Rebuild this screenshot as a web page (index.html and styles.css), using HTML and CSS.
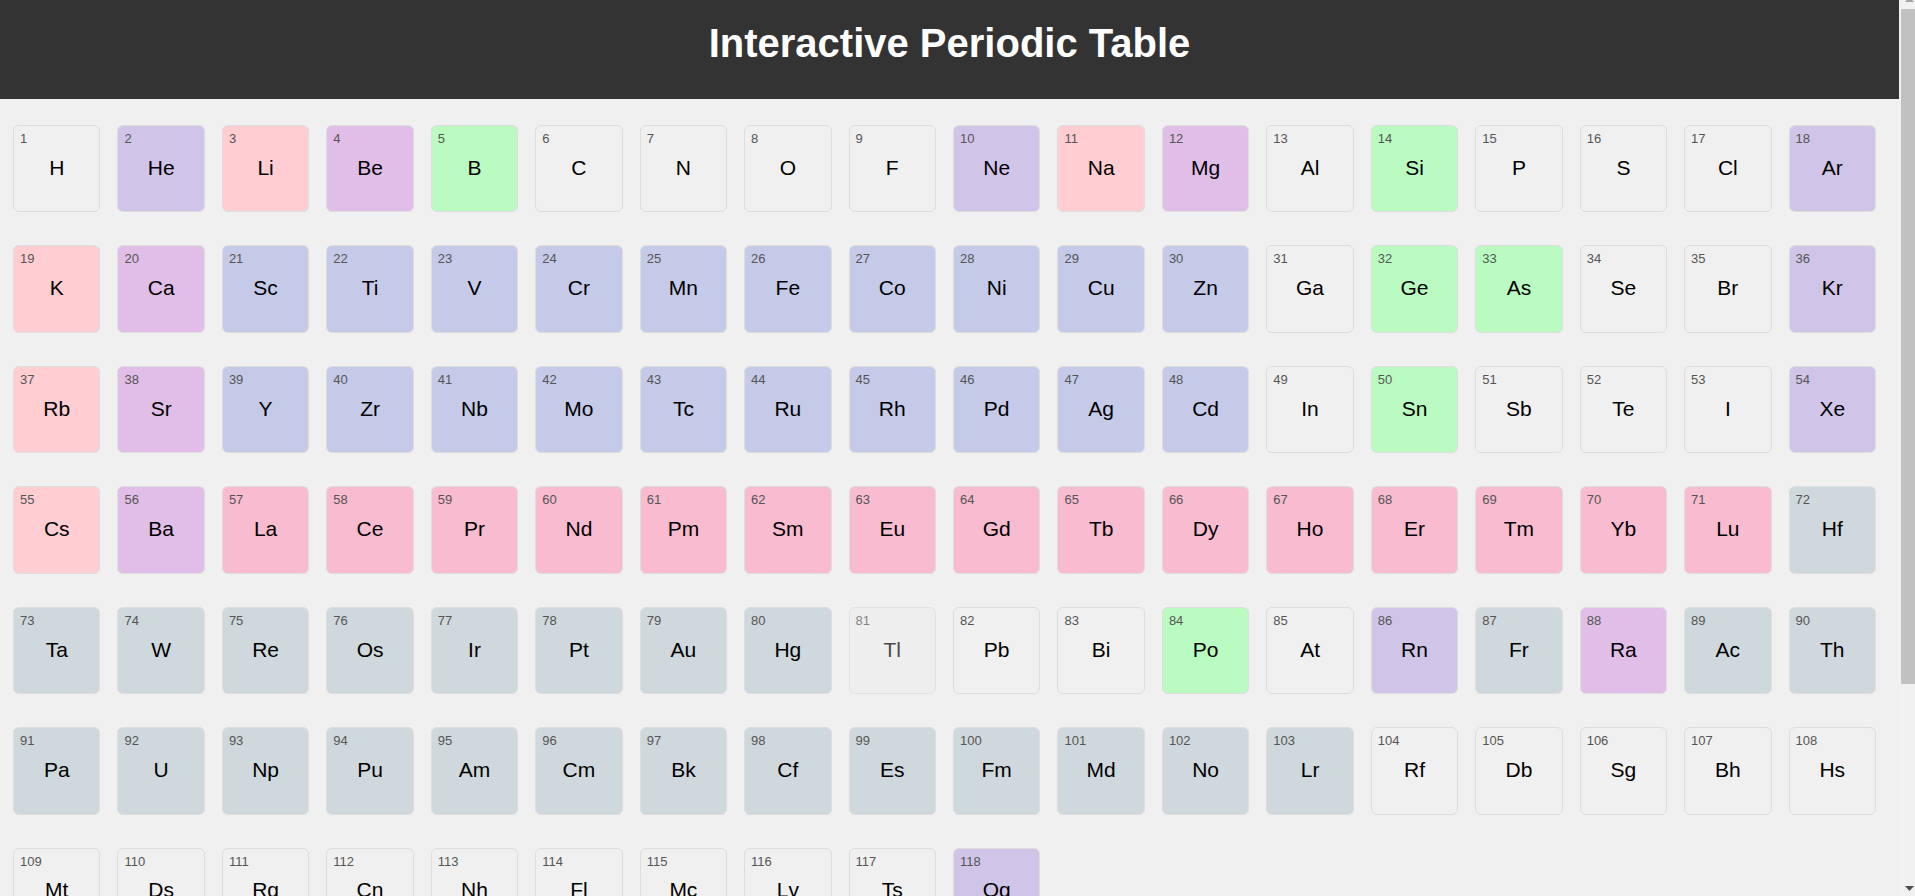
FILE: index.html
```html
<!DOCTYPE html>
<html lang="en">
<head>
<meta charset="utf-8">
<title>Interactive Periodic Table</title>
<link rel="stylesheet" href="styles.css">
</head>
<body>
<div class="page">
  <header class="header"><h1 class="title">Interactive Periodic Table</h1></header>
  <main class="table" id="table"></main>
</div>
<div class="scrollbar" aria-hidden="true">
  <svg class="arrow arrow-up" viewBox="0 0 9 5"><path d="M0 5L4.500 0L9 5Z"/></svg>
  <div class="track"><div class="thumb"></div></div>
  <svg class="arrow arrow-down" viewBox="0 0 9 5"><path d="M0 0H9L4.500 5Z"/></svg>
</div>
<script src="script.js"></script>
</body>
</html>
```
FILE: styles.css
```css
* { box-sizing: border-box; }

body {
  margin: 0;
  height: 100vh;
  display: flex;
  overflow: hidden;
  background: #f0f0f0;
  font-family: "Liberation Sans", Arial, sans-serif;
}

.page {
  flex: 1;
  min-width: 0;
  overflow: hidden;
}

.header {
  padding: 20px 20px 32px;
  background: #333;
  color: #fff;
  text-align: center;
}

.title {
  margin: 0;
  font-size: 40px;
  line-height: 47px;
}

.table {
  display: grid;
  grid-template-columns: repeat(18, minmax(0, 1fr));
  gap: 33px 17px;
  padding: 26px 23px 26px 13px;
}

.element {
  display: grid;
  place-items: center;
  position: relative;
  aspect-ratio: 1;
  padding: 0 0 2px;
  border: 1px solid #ddd;
  border-radius: 6px;
  background: transparent;
  color: #000;
  font-family: inherit;
  font-size: 21px;
  line-height: 24px;
  cursor: pointer;
}

.number {
  position: absolute;
  top: 5px;
  left: 6px;
  color: #555;
  font-size: 13px;
  line-height: 15px;
}

.noble { background: #d1c4e9; }
.alkali { background: #ffcdd2; }
.alkaline { background: #e1bee7; }
.metalloid { background: #b9fbc0; }
.transition { background: #c5cae9; }
.lanthanide { background: #f8bbd0; }
.heavy { background: #cfd8dc; }
.active { background: #eee; opacity: 0.7; }

.scrollbar {
  width: 16px;
  padding: 0 0 5px 2px;
  display: flex;
  flex-direction: column;
  background: #f1f1f1;
}

.arrow {
  width: 9px;
  height: 5px;
  margin-left: 4px;
  fill: #505050;
}

.arrow-up {
  margin-top: -3px;
  margin-bottom: 7px;
  fill: #a3a3a3;
}

.track { flex: 1; }

.thumb {
  height: 77%;
  background: #c1c1c1;
}
```
FILE: script.js
```js
const symbols = `H He Li Be B C N O F Ne Na Mg Al Si P S Cl Ar
K Ca Sc Ti V Cr Mn Fe Co Ni Cu Zn Ga Ge As Se Br Kr
Rb Sr Y Zr Nb Mo Tc Ru Rh Pd Ag Cd In Sn Sb Te I Xe
Cs Ba La Ce Pr Nd Pm Sm Eu Gd Tb Dy Ho Er Tm Yb Lu Hf
Ta W Re Os Ir Pt Au Hg Tl Pb Bi Po At Rn Fr Ra Ac Th
Pa U Np Pu Am Cm Bk Cf Es Fm Md No Lr Rf Db Sg Bh Hs
Mt Ds Rg Cn Nh Fl Mc Lv Ts Og`.split(/\s+/);

// Inclusive ranges of atomic numbers for each colour group.
const groups = {
  noble: [[2, 2], [10, 10], [18, 18], [36, 36], [54, 54], [86, 86], [118, 118]],
  alkali: [[3, 3], [11, 11], [19, 19], [37, 37], [55, 55]],
  alkaline: [[4, 4], [12, 12], [20, 20], [38, 38], [56, 56], [88, 88]],
  metalloid: [[5, 5], [14, 14], [32, 33], [50, 50], [84, 84]],
  transition: [[21, 30], [39, 48]],
  lanthanide: [[57, 71]],
  heavy: [[72, 80], [87, 87], [89, 103]],
  active: [[81, 81]]
};

const table = document.getElementById("table");

symbols.forEach((symbol, index) => {
  const number = index + 1;
  const group = Object.keys(groups).find((name) =>
    groups[name].some(([from, to]) => number >= from && number <= to));
  const cell = document.createElement("button");
  cell.type = "button";
  cell.className = group ? `element ${group}` : "element";
  const label = document.createElement("span");
  label.className = "number";
  label.textContent = number;
  const name = document.createElement("span");
  name.textContent = symbol;
  cell.append(label, name);
  table.append(cell);
});
```
